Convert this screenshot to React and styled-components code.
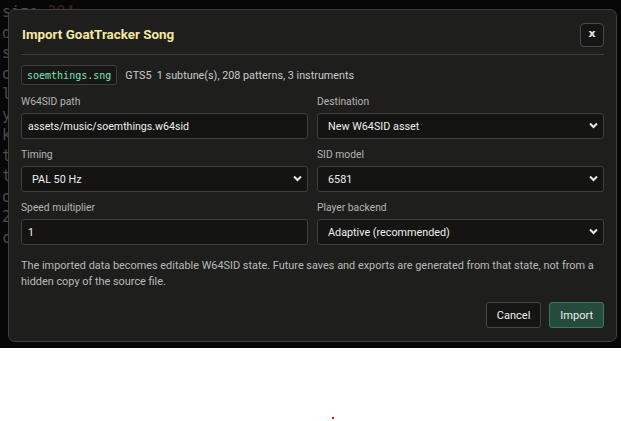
import React from "react";
import styled, { createGlobalStyle } from "styled-components";

const Global = createGlobalStyle`
  html, body { margin: 0; padding: 0; background: #ffffff; }
  body { font-family: Roboto, "Noto Sans", sans-serif; }
  * { box-sizing: border-box; }
`;

const Screen = styled.div`
  position: relative;
  height: 348px;
  background: #0b0c0b;
  overflow: hidden;
`;

const CodeColumn = styled.div`
  display: flex;
  flex-direction: column;
  padding: 2px 0 0 2px;
  font-family: "DejaVu Sans Mono", "Liberation Mono", monospace;
  font-size: 15px;
  line-height: 20.5px;
  color: #6f736f;
`;

const CodeLine = styled.div`
  white-space: pre;
`;

const Red = styled.span`
  color: #6e2b27;
`;

const Overlay = styled.div`
  position: absolute;
  inset: 0;
  background: rgba(0, 0, 0, 0.35);
  padding: 9px 4px 0 8px;
`;

const Modal = styled.div`
  width: 609px;
  height: 333px;
  background: #1e1f1d;
  border: 1px solid #3e423e;
  border-radius: 7px;
  padding: 12px 12px 0 12px;
  display: flex;
  flex-direction: column;
`;

const Header = styled.div`
  display: flex;
  align-items: center;
  justify-content: space-between;
  height: 25px;
  padding-left: 1px;
  margin-bottom: 7px;
`;

const Title = styled.h2`
  margin: 0;
  font-size: 13.4px;
  font-weight: 700;
  color: #f6e7a3;
`;

const CloseButton = styled.button`
  width: 24px;
  height: 24px;
  background: #151614;
  border: 1px solid #474b47;
  border-radius: 4px;
  color: #e6e6e6;
  font-family: "DejaVu Sans", sans-serif;
  font-size: 11px;
  font-weight: 700;
  padding: 0 0 2px 0;
  display: flex;
  align-items: center;
  justify-content: center;
`;

const Divider = styled.hr`
  margin: 0;
  border: none;
  border-top: 1px solid #3a3d3a;
`;

const InfoRow = styled.div`
  display: flex;
  align-items: center;
  gap: 8px;
  margin-top: 10px;
`;

const Chip = styled.code`
  display: inline-flex;
  align-items: center;
  height: 20px;
  padding: 0 5px;
  border: 1px solid #3c403c;
  border-radius: 3px;
  background: #171816;
  font-family: "DejaVu Sans Mono", "Liberation Mono", monospace;
  font-size: 10px;
  color: #7fe3b6;
`;

const InfoText = styled.span`
  font-size: 10.8px;
  color: #c9cbc8;
  white-space: pre;
`;

const Grid = styled.div`
  display: grid;
  grid-template-columns: 1fr 1fr;
  column-gap: 9px;
  row-gap: 9px;
  margin-top: 10px;
`;

const Field = styled.label`
  display: flex;
  flex-direction: column;
  gap: 4px;
`;

const Label = styled.span`
  font-size: 10.3px;
  color: #b3b5b2;
  line-height: 14px;
`;

const controlBase = `
  width: 100%;
  height: 26px;
  background: #141513;
  border: 1px solid #3d403d;
  border-radius: 3px;
  color: #eeeeee;
  font-family: Roboto, "Noto Sans", sans-serif;
  outline: none;
`;

const TextInput = styled.input`
  ${controlBase}
  font-size: 10.6px;
  padding: 0 6px;
`;

const SelectWrap = styled.div`
  position: relative;
`;

const Select = styled.select`
  ${controlBase}
  font-size: 10.8px;
  appearance: none;
  -webkit-appearance: none;
  padding: 0 0 0 ${(p) => p.$pad || 6}px;
`;

const Chevron = styled.svg`
  position: absolute;
  right: 6px;
  top: 9px;
  width: 9px;
  height: 7px;
  pointer-events: none;
`;

const Note = styled.p`
  margin: 13px 0 0 0;
  font-size: 10.9px;
  line-height: 16px;
  color: #b9bbb8;
`;

const Footer = styled.div`
  display: flex;
  justify-content: flex-end;
  gap: 8px;
  margin-top: auto;
  margin-bottom: 13px;
`;

const Button = styled.button`
  height: 26px;
  padding: 0 10px;
  border-radius: 3px;
  font-family: Roboto, "Noto Sans", sans-serif;
  font-size: 11px;
  color: #eef0ee;
  background: ${(p) => (p.$primary ? "#244b3b" : "#151614")};
  border: 1px solid ${(p) => (p.$primary ? "#3f7660" : "#434643")};
`;

const Dot = styled.div`
  position: absolute;
  left: 332px;
  top: 417px;
  width: 2px;
  height: 2px;
  background: #e01010;
`;

function ChevronIcon() {
  return (
    <Chevron viewBox="0 0 9 7">
      <path d="M1 1.5 L4.5 5 L8 1.5" fill="none" stroke="#e8e8e8" strokeWidth="2" />
    </Chevron>
  );
}

function SelectField({ label, value, options, pad }) {
  return (
    <Field>
      <Label>{label}</Label>
      <SelectWrap>
        <Select $pad={pad} defaultValue={value}>
          {options.map((o) => (
            <option key={o}>{o}</option>
          ))}
        </Select>
        <ChevronIcon />
      </SelectWrap>
    </Field>
  );
}

const codeLines = ["d", "s", "o", "l", "y", "k", "t", "t", "o", "", "2", "c"];

export default function App() {
  return (
    <>
      <Global />
      <Screen>
        <CodeColumn>
          <CodeLine>
            size <Red>204</Red>
          </CodeLine>
          {codeLines.map((c, i) => (
            <CodeLine key={i}>{c}</CodeLine>
          ))}
        </CodeColumn>
        <Overlay>
          <Modal>
            <Header>
              <Title>Import GoatTracker Song</Title>
              <CloseButton>x</CloseButton>
            </Header>
            <Divider />
            <InfoRow>
              <Chip>soemthings.sng</Chip>
              <InfoText>GTS5  1 subtune(s), 208 patterns, 3 instruments</InfoText>
            </InfoRow>
            <Grid>
              <Field>
                <Label>W64SID path</Label>
                <TextInput defaultValue="assets/music/soemthings.w64sid" />
              </Field>
              <SelectField
                label="Destination"
                value="New W64SID asset"
                options={["New W64SID asset", "Replace existing asset"]}
                pad={10}
              />
              <SelectField
                label="Timing"
                value="PAL 50 Hz"
                options={["PAL 50 Hz", "NTSC 60 Hz"]}
                pad={10}
              />
              <SelectField label="SID model" value="6581" options={["6581", "8580"]} pad={10} />
              <Field>
                <Label>Speed multiplier</Label>
                <TextInput defaultValue="1" />
              </Field>
              <SelectField
                label="Player backend"
                value="Adaptive (recommended)"
                options={["Adaptive (recommended)", "Classic"]}
                pad={10}
              />
            </Grid>
            <Note>
              The imported data becomes editable W64SID state. Future saves and exports are generated
              from that state, not from a hidden copy of the source file.
            </Note>
            <Footer>
              <Button>Cancel</Button>
              <Button $primary>Import</Button>
            </Footer>
          </Modal>
        </Overlay>
      </Screen>
      <Dot />
    </>
  );
}
